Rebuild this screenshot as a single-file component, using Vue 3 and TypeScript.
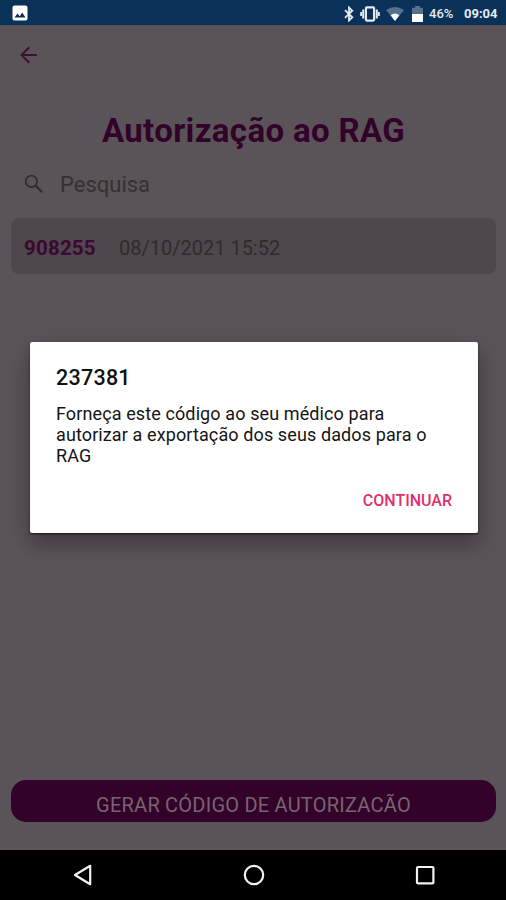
<script setup lang="ts">
interface Authorization {
  code: string
  date: string
}

const records: Authorization[] = [{ code: '908255', date: '08/10/2021 15:52' }]
const dialogCode = '237381'
</script>

<template>
  <div class="phone">
    <header class="status">
      <svg class="picture" viewBox="0 0 16 16" width="16" height="16">
        <rect x="0.5" y="0.5" width="15" height="15" rx="2" fill="#fff" />
        <path d="M2.5 12.5 5.5 8.5 7.7 11.2 10.2 7.5 13.5 12.5z" fill="#0a3158" />
      </svg>
      <div class="indicators">
        <svg class="bluetooth" viewBox="0 0 10 16" width="10" height="16" fill="none" stroke="#e4ebf2" stroke-width="1.8">
          <path d="M1 4.2 8.3 11.3 5 14.5V1.5L8.3 4.7 1 11.8" />
        </svg>
        <svg class="vibrate" viewBox="0 0 20 16" width="20" height="16" fill="none" stroke="#e4ebf2">
          <rect x="5.9" y="1.4" width="8.2" height="13.2" rx="1" stroke-width="2.2" />
          <path d="M3.2 3.6v8.8M16.8 3.6v8.8" stroke-width="2" />
          <path d="M1.1 6v4M18.9 6v4" stroke-width="1.8" />
        </svg>
        <svg class="wifi" viewBox="0 0 18 14" width="18" height="14">
          <path d="M0 3Q9-3 18 3L9 14z" fill="#54708c" />
          <path d="M4.6 8.2Q9 5 13.4 8.2L9 14z" fill="#fff" />
        </svg>
        <svg class="battery" viewBox="0 0 11 16" width="11" height="16">
          <path d="M0 1.8h3V0h5v1.8h3V8H0z" fill="#54708c" />
          <path d="M0 8h11v8H0z" fill="#fff" />
        </svg>
        <span class="percent">46%</span>
        <span class="clock">09:04</span>
      </div>
    </header>

    <main class="screen">
      <svg class="back" viewBox="0 0 18 18" width="18" height="18" fill="none" stroke="#3c1232" stroke-width="2">
        <path d="M17 9H2M9.3 1.2 1.5 9l7.8 7.8" />
      </svg>
      <h1 class="heading">Autorização ao RAG</h1>
      <div class="search">
        <svg viewBox="0 0 20 20" width="20" height="20" fill="none" stroke="#302c2f" stroke-width="1.8">
          <circle cx="7.4" cy="7.4" r="5.7" />
          <path d="m11.6 11.6 6.6 6.6" stroke-width="2.2" />
        </svg>
        <span class="placeholder">Pesquisa</span>
      </div>
      <div v-for="item in records" :key="item.code" class="record">
        <strong class="code">{{ item.code }}</strong>
        <span class="date">{{ item.date }}</span>
      </div>
      <button class="generate"><span class="label">GERAR CÓDIGO DE AUTORIZAÇÃO</span></button>
    </main>

    <nav class="navigation">
      <svg viewBox="0 0 22 22" width="22" height="22" fill="none" stroke="#f2f2f2" stroke-width="2.2" stroke-linejoin="round">
        <path d="M18.2 1.8v18.4L3 11z" />
      </svg>
      <svg viewBox="0 0 22 22" width="22" height="22" fill="none" stroke="#f2f2f2" stroke-width="2.2">
        <circle cx="11" cy="11" r="9.2" />
      </svg>
      <svg viewBox="0 0 22 22" width="22" height="22" fill="none" stroke="#f2f2f2" stroke-width="2.2">
        <rect x="3" y="3" width="16.4" height="16.4" rx="1" />
      </svg>
    </nav>

    <section class="dialog" role="dialog">
      <h2 class="dialog-title">{{ dialogCode }}</h2>
      <p class="message">Forneça este código ao seu médico para<br />autorizar a exportação dos seus dados para o<br />RAG</p>
      <button class="continue">CONTINUAR</button>
    </section>
  </div>
</template>

<style>
body {
  margin: 0;
}
</style>

<style scoped>
.phone {
  position: relative;
  display: flex;
  flex-direction: column;
  width: 506px;
  height: 900px;
  overflow: hidden;
  background: #5a5458;
  font-family: Roboto, "Liberation Sans", sans-serif;
}
.phone * {
  box-sizing: border-box;
}
svg {
  display: block;
  flex: none;
}
button {
  font-family: inherit;
  border: 0;
  padding: 0;
}
.status {
  display: flex;
  align-items: flex-start;
  justify-content: space-between;
  height: 25px;
  padding: 5px 8px 0 12px;
  background: #0a3158;
}
.indicators {
  display: flex;
  align-items: center;
  height: 17px;
  color: #e4ebf2;
  font-size: 13px;
  font-weight: 700;
  white-space: nowrap;
}
.bluetooth {
  margin-right: 6px;
}
.wifi {
  margin-left: 6px;
}
.battery {
  margin-left: 8px;
}
.percent {
  width: 26px;
  margin-left: 6px;
  font-weight: 500;
}
.clock {
  width: 34px;
  margin-left: 9px;
}
.screen {
  display: flex;
  flex-direction: column;
  height: 825px;
  padding: 21px 10px 28px 11px;
}
.back {
  margin-left: 9px;
}
.heading {
  margin: 47px 0 0;
  font-size: 33px;
  line-height: 40px;
  font-weight: 700;
  letter-spacing: 0.35px;
  color: #33022a;
  text-align: center;
}
.search {
  display: flex;
  align-items: center;
  height: 30px;
  margin-top: 18px;
  padding-left: 13px;
}
.placeholder {
  margin-left: 16px;
  font-size: 22px;
  color: #353034;
}
.record {
  display: flex;
  align-items: center;
  height: 56px;
  margin-top: 19px;
  padding: 3px 0 0 13px;
  border-radius: 8px;
  background: #4e484c;
  font-size: 20px;
}
.code {
  width: 95px;
  font-size: 20.5px;
  letter-spacing: 0.2px;
  color: #3d0733;
}
.date {
  color: #302b2e;
}
.generate {
  display: flex;
  justify-content: center;
  height: 42px;
  margin-top: auto;
  padding-top: 8px;
  border-radius: 15px;
  background: #33022a;
}
.label {
  height: 24px;
  overflow: hidden;
  color: #76656f;
  font-size: 20px;
  line-height: 34px;
  letter-spacing: 0.23px;
  white-space: nowrap;
}
.navigation {
  display: flex;
  align-items: center;
  gap: 149px;
  height: 50px;
  padding-left: 72px;
  background: #000;
}
.dialog {
  position: absolute;
  top: 342px;
  left: 30px;
  display: flex;
  flex-direction: column;
  width: 448px;
  height: 191px;
  padding: 22px 26px 0;
  border-radius: 2px;
  background: #fff;
  box-shadow: 0 1px 2px #1b141a, 0 10px 22px rgba(20, 10, 18, 0.4);
}
.dialog-title {
  margin: 0;
  font-size: 21.5px;
  line-height: 28px;
  font-weight: 500;
  letter-spacing: 0.25px;
  color: #111;
}
.message {
  margin: 11px 0 0;
  font-size: 18px;
  line-height: 21px;
  letter-spacing: 0.11px;
  white-space: nowrap;
  color: #151515;
}
.continue {
  align-self: flex-end;
  margin-top: 24px;
  background: none;
  color: #e0306f;
  font-size: 16px;
  line-height: 22px;
  font-weight: 500;
}
</style>
